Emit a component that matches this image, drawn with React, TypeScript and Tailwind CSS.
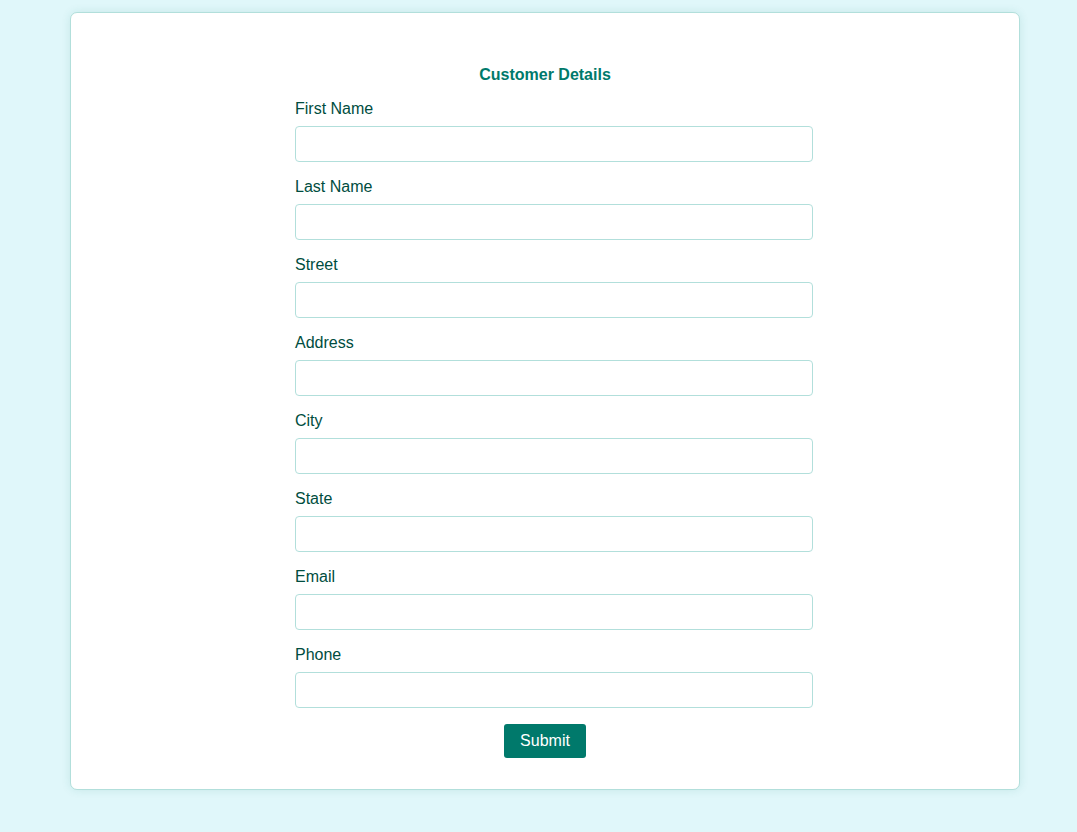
import React from "react";

const fields = ["First Name", "Last Name", "Street", "Address", "City", "State", "Email", "Phone"];

export default function App() {
  return (
    <div
      className="min-h-[832px] w-full bg-[#e0f7fa] pt-[12px]"
      style={{ fontFamily: '"Liberation Sans", Arial, sans-serif' }}
    >
      <div className="ml-[70px] w-[950px] rounded-[7px] border border-[#b2dfdb] bg-white pt-[52px] pb-[31px] shadow-[0_0_10px_rgba(0,121,107,0.12)]">
        <form className="ml-[224px] w-[500px]" onSubmit={(e) => e.preventDefault()}>
          <h2 className="mb-[14px] text-center text-[16px] font-bold leading-[20px] text-[#00796b]">
            Customer Details
          </h2>
          {fields.map((f, i) => (
            <div key={f} className={i === fields.length - 1 ? "" : "mb-[15px]"}>
              <label className="mb-[7px] block text-[16px] leading-[20px] text-[#004d40]">{f}</label>
              <input
                type="text"
                className="block h-[36px] w-[518px] rounded-[4px] border border-[#b2dfdb] bg-white px-[8px] text-[16px] outline-none"
              />
            </div>
          ))}
          <div className="mt-[16px] flex justify-center">
            <button
              type="submit"
              className="h-[34px] w-[82px] rounded-[3px] bg-[#00796b] text-[16px] leading-[18px] text-white"
            >
              Submit
            </button>
          </div>
        </form>
      </div>
    </div>
  );
}
